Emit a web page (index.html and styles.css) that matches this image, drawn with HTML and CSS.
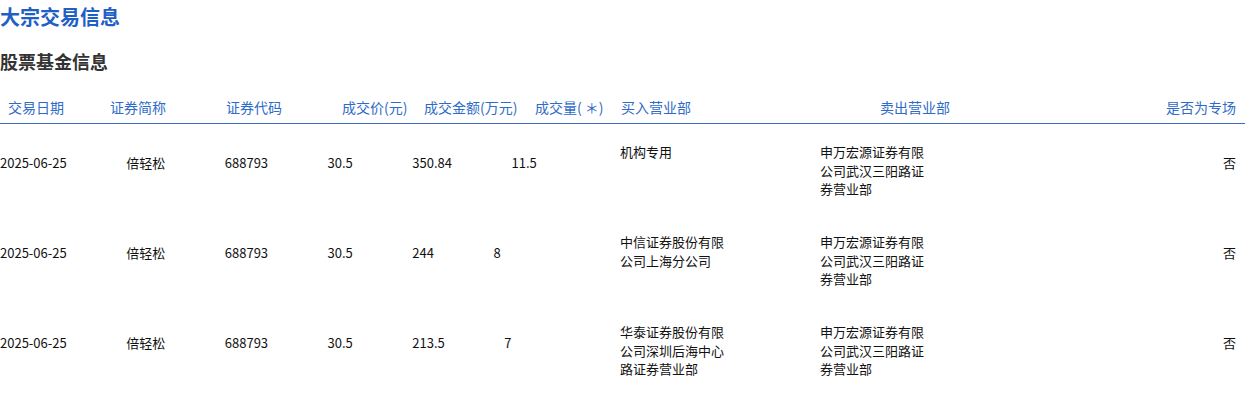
FILE: index.html
```html
<!DOCTYPE html>
<html lang="zh-CN">
<head>
<meta charset="utf-8">
<title>大宗交易信息</title>
<link rel="stylesheet" href="styles.css">
</head>
<body>
<h1 class="title">大宗交易信息</h1>
<h2 class="section">股票基金信息</h2>
<div class="table">
  <div class="thead">
    <div class="th c-date">交易日期</div>
    <div class="th c-name">证券简称</div>
    <div class="th c-code">证券代码</div>
    <div class="th c-price">成交价(元)</div>
    <div class="th c-amount">成交金额(万元)</div>
    <div class="th c-vol">成交量( ＊)</div>
    <div class="th c-buy">买入营业部</div>
    <div class="th c-sell">卖出营业部</div>
    <div class="th c-special">是否为专场</div>
  </div>
  <div class="row">
    <div class="nums"><span>2025-06-25</span><span>倍轻松</span><span>688793</span><span>30.5</span><span>350.84</span><span>11.5</span></div>
    <div class="dept buy"><div class="dept-text">机构专用</div></div>
    <div class="dept sell"><div class="dept-text">申万宏源证券有限公司武汉三阳路证券营业部</div></div>
    <div class="special">否</div>
  </div>
  <div class="row">
    <div class="nums"><span>2025-06-25</span><span>倍轻松</span><span>688793</span><span>30.5</span><span>244</span><span>8</span></div>
    <div class="dept buy"><div class="dept-text">中信证券股份有限公司上海分公司</div></div>
    <div class="dept sell"><div class="dept-text">申万宏源证券有限公司武汉三阳路证券营业部</div></div>
    <div class="special">否</div>
  </div>
  <div class="row">
    <div class="nums"><span>2025-06-25</span><span>倍轻松</span><span>688793</span><span>30.5</span><span>213.5</span><span>7</span></div>
    <div class="dept buy"><div class="dept-text">华泰证券股份有限公司深圳后海中心路证券营业部</div></div>
    <div class="dept sell"><div class="dept-text">申万宏源证券有限公司武汉三阳路证券营业部</div></div>
    <div class="special">否</div>
  </div>
</div>
</body>
</html>
```
FILE: styles.css
```css
* { box-sizing: border-box; }
html, body { margin: 0; padding: 0; background: #fff; }
body {
  font-family: "Noto Sans CJK SC", "Noto Sans", sans-serif;
  color: #111;
  width: 1245px;
}
.title {
  margin: 0;
  font-size: 20px;
  line-height: 34px;
  font-weight: bold;
  color: #1f60c6;
}
.section {
  margin: 14px 0 0;
  font-size: 18px;
  line-height: 26px;
  font-weight: bold;
  color: #333;
}
.thead {
  margin-top: 18px;
  display: flex;
  height: 32px;
  line-height: 31px;
  border-bottom: 1px solid #3a6bbf;
  font-size: 14px;
  color: #2f6bc8;
}
.th { white-space: nowrap; }
.c-date { width: 110px; padding-left: 8px; }
.c-name { width: 116px; }
.c-code { width: 116px; }
.c-price { width: 82px; }
.c-amount { width: 111px; }
.c-vol { width: 86px; }
.c-buy { width: 259px; }
.c-sell { flex: 1; }
.c-special { padding-right: 9px; }

.row {
  display: flex;
  height: 90px;
  font-size: 13px;
  line-height: 18.5px;
}
.nums {
  width: 620px;
  display: flex;
  gap: 59.5px;
  padding-top: 30px;
  white-space: nowrap;
}
.dept { padding-top: 19px; }
.buy { width: 200px; }
.sell { flex: 1; }
.dept-text { width: 105px; }
.special {
  padding-top: 30px;
  padding-right: 9px;
}
```
